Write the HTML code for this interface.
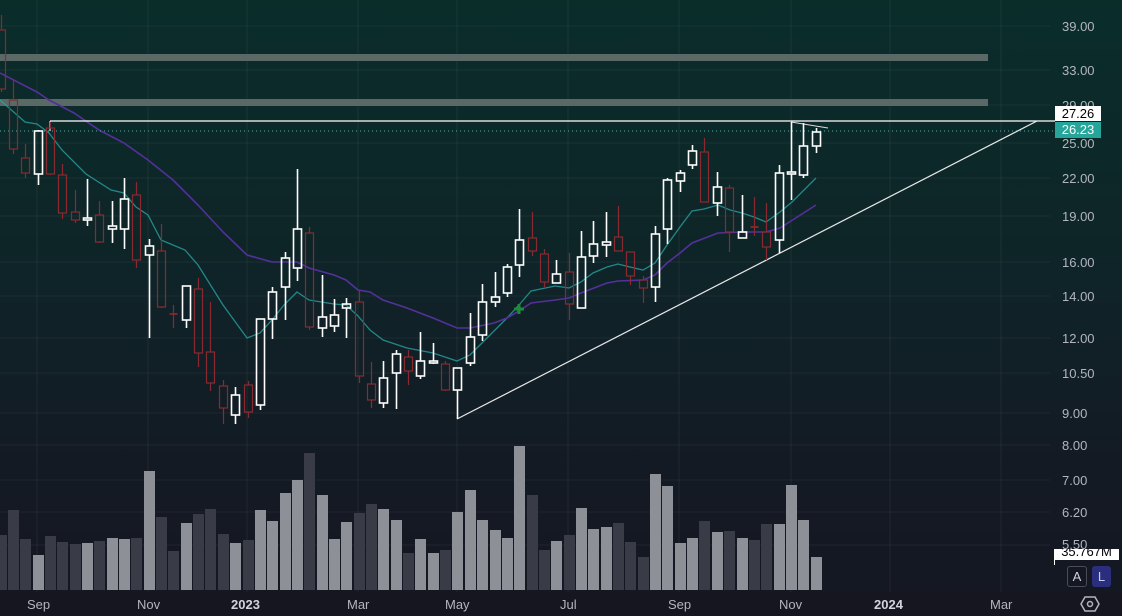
<!DOCTYPE html>
<html><head><meta charset="utf-8"><style>
html,body{margin:0;padding:0;background:#131722;}
#c{position:relative;width:1122px;height:616px;overflow:hidden;background:linear-gradient(180deg,#0a2d2a 0%,#0f2428 45%,#131a24 75%,#151722 100%);font-family:"Liberation Sans",sans-serif;}
.ax{position:absolute;left:1062px;color:#b2b5be;font-size:13px;line-height:13px;}
.bx{position:absolute;color:#b2b5be;font-size:13px;top:597px;}
</style></head><body><div id="c">
<div style="position:absolute;left:0;top:592px;width:1122px;height:24px;background:#161621"></div>
<svg id="s" width="1122" height="616" style="position:absolute;left:0;top:0"></svg>
<div class="ax" style="top:20px">39.00</div>
<div class="ax" style="top:64px">33.00</div>
<div class="ax" style="top:99px">29.00</div>
<div class="ax" style="top:137px">25.00</div>
<div class="ax" style="top:172px">22.00</div>
<div class="ax" style="top:210px">19.00</div>
<div class="ax" style="top:256px">16.00</div>
<div class="ax" style="top:290px">14.00</div>
<div class="ax" style="top:332px">12.00</div>
<div class="ax" style="top:367px">10.50</div>
<div class="ax" style="top:407px">9.00</div>
<div class="ax" style="top:439px">8.00</div>
<div class="ax" style="top:474px">7.00</div>
<div class="ax" style="top:506px">6.20</div>
<div class="ax" style="top:538px">5.50</div>
<div style="position:absolute;left:1055px;top:106px;width:46px;height:15px;background:#fff;color:#000;font-size:13px;line-height:15px;text-align:center">27.26</div>
<div style="position:absolute;left:1055px;top:122px;width:46px;height:16px;background:#26a69a;color:#fff;font-size:13px;line-height:16px;text-align:center">26.23</div>
<div style="position:absolute;left:1054px;top:549px;width:65px;height:11px;overflow:hidden;background:#fff;color:#000;font-size:13px;line-height:6px;text-align:center">35.767M</div>
<div style="position:absolute;left:1054px;top:549px;width:1px;height:16px;background:#fff"></div>
<div style="position:absolute;left:1067px;top:566px;width:18px;height:19px;border:1px solid #4a4d58;border-radius:3px;color:#d1d4dc;font-size:13px;line-height:19px;text-align:center">A</div>
<div style="position:absolute;left:1092px;top:566px;width:19px;height:21px;background:#2a2e7c;border-radius:3px;color:#c8cbf0;font-size:13px;line-height:21px;text-align:center">L</div>
<div class="bx" style="left:27px">Sep</div>
<div class="bx" style="left:137px">Nov</div>
<div class="bx" style="left:231px;font-weight:bold;color:#d1d4dc">2023</div>
<div class="bx" style="left:347px">Mar</div>
<div class="bx" style="left:445px">May</div>
<div class="bx" style="left:560px">Jul</div>
<div class="bx" style="left:668px">Sep</div>
<div class="bx" style="left:779px">Nov</div>
<div class="bx" style="left:874px;font-weight:bold;color:#d1d4dc">2024</div>
<div class="bx" style="left:990px">Mar</div>
<svg width="20" height="18" style="position:absolute;left:1080px;top:595px"><polygon points="5,2 15,2 19,9 15,16 5,16 1,9" fill="none" stroke="#b2b5be" stroke-width="1.5"/><circle cx="10" cy="9" r="2.5" fill="none" stroke="#b2b5be" stroke-width="1.5"/></svg>
</div>
<script>
var s=document.getElementById('s'),h='';
function L(x1,y1,x2,y2,c,w,extra){h+='<line x1="'+x1+'" y1="'+y1+'" x2="'+x2+'" y2="'+y2+'" stroke="'+c+'" stroke-width="'+(w||1)+'" '+(extra||'')+'/>';}
[37,148,247,358,457,568,679,791,890,1001].forEach(function(x){L(x,0,x,592,'rgba(255,255,255,0.06)');});
[26,70,105,143,178,216,262,296,338,373,413,445,480,512,545].forEach(function(y){L(0,y,1050,y,'rgba(255,255,255,0.05)');});
h+='<rect x="0" y="54" width="988" height="7" fill="#5a6866"/><rect x="0" y="99" width="988" height="7" fill="#5a6866"/>';
var vt=[535,510,539,555,536,542,544,543,541,538,539,538,471,517,551,523,514,509,534,543,540,510,521,493,480,453,495,539,522,513,504,509,520,553,539,553,550,512,490,520,530,538,446,495,550,541,535,508,529,527,523,542,557,474,486,543,538,521,532,531,538,540,524,524,485,520,557];
var C=[[1,15,30,89,92],[1,80,100,149,154],[1,144,158,173,178],[0,130,131,174,185],[1,122,128,174,175],[1,164,175,213,219],[1,190,212,220,223],[0,179,218,220,226],[1,201,215,242,243],[0,201,226,229,243],[0,178,199,229,249],[1,182,195,260,268],[0,239,246,255,338],[1,224,251,307,308],[1,305,314,314,328],[0,286,286,320,328],[1,278,289,353,367],[1,302,352,383,391],[1,380,386,408,424],[0,387,395,415,424],[1,381,385,412,418],[0,319,319,405,410],[0,287,292,319,339],[0,252,258,287,320],[0,169,229,268,281],[1,227,233,327,330],[0,275,317,328,337],[0,299,315,326,332],[0,298,304,308,338],[1,290,302,376,383],[1,362,384,400,408],[0,361,378,403,408],[0,350,354,373,409],[1,350,357,371,385],[0,332,361,376,379],[0,343,361,363,364],[1,361,364,390,391],[0,368,368,390,419],[0,313,337,363,366],[0,284,302,335,341],[0,272,297,302,307],[0,264,267,293,297],[0,209,240,265,277],[1,212,238,251,256],[1,249,254,282,287],[0,260,274,283,283],[1,253,272,304,320],[0,231,257,308,308],[0,221,244,256,263],[0,212,242,245,257],[1,206,237,251,251],[1,252,252,276,285],[1,276,280,288,303],[0,226,234,287,302],[0,178,180,229,244],[0,170,173,181,192],[0,145,151,165,169],[1,138,152,202,202],[0,172,187,203,216],[1,185,188,232,252],[0,195,232,238,238],[1,197,227,227,236],[1,203,232,247,260],[0,165,173,240,253],[0,122,172,174,200],[0,123,146,175,178],[0,128,132,146,153]];
for(var i=0;i<C.length;i++){var x=Math.round(0.5+12.35*i)+0.5;var v=vt[i];var red=C[i][0];
h+='<rect x="'+(x-5.5)+'" y="'+v+'" width="11" height="'+(590-v)+'" fill="'+(red?'#393b47':'#8e9097')+'"/>';}
h+='<polyline fill="none" stroke="rgba(42,170,170,0.75)" stroke-width="1.3" points="0,100 25,122 37,124 49,133 62,150 86,174 111,190 124,193 136,207 148,215 161,240 185,250 198,265 223,305 247,338 260,333 272,320 284,305 297,292 309,300 334,304 346,305 358,316 370,330 383,340 407,348 433,353 457,361 470,355 483,342 507,318 519,305 531,291 555,286 569,288 581,282 593,273 607,267 618,264 630,267 643,270 655,263 667,245 680,227 692,211 704,209 718,205 730,210 742,213 754,217 766,222 780,212 792,202 816,178"/>';
h+='<polyline fill="none" stroke="#54309a" stroke-width="1.6" points="0,73 37,92 49,100 74,113 99,130 124,143 148,160 173,180 198,205 223,232 247,255 272,262 297,262 309,268 334,275 346,280 358,290 370,292 383,300 407,308 433,318 457,328 470,328 494,323 507,318 519,311 531,303 555,300 569,298 581,293 607,283 618,281 643,280 655,275 667,263 680,253 692,243 718,233 742,232 766,232 780,228 816,205"/>';
L(0,131,1054,131,'#4fb3a8',1,'stroke-dasharray="1,3"');
L(50,121,1055,121,'#fff',1.2);L(50,121,50,131,'#fff',1);
L(457,419,1037,121,'#e8e8e8',1.2);L(791,122,828,128,'#dcdcdc',1);
for(var i=0;i<C.length;i++){var x=Math.round(0.5+12.35*i)+0.5;var c=C[i],col=c[0]?'#8a2a30':'#ffffff',w=c[0]?1.2:1.6;
L(x,c[1],x,c[2],col,w);L(x,c[3],x,c[4],col,w);
if(c[3]-c[2]<2){L(x-4,c[2],x+4,c[2],col,w+0.5);}else{h+='<rect x="'+(x-4)+'" y="'+c[2]+'" width="8" height="'+(c[3]-c[2])+'" fill="none" stroke="'+col+'" stroke-width="'+w+'"/>';}}
L(514,309,524,309,'#1f8a3a',3);L(519,304,519,314,'#1f8a3a',3);
s.innerHTML=h;
</script>
</body></html>
